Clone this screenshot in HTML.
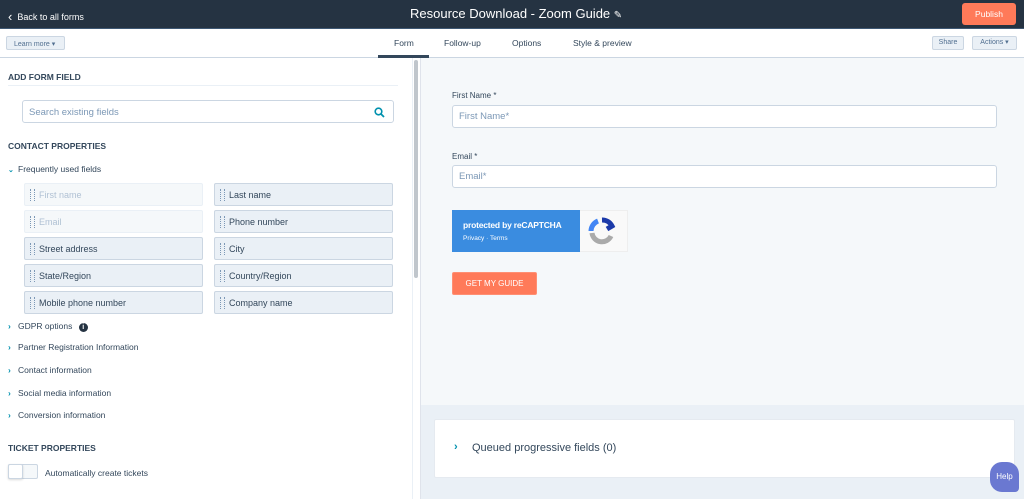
<!DOCTYPE html>
<html><head><style>
*{box-sizing:border-box;margin:0;padding:0}
body{width:1024px;height:499px;overflow:hidden;font-family:"Liberation Sans",sans-serif;background:#f5f8fa;position:relative;color:#33475b}
.a{position:absolute}
.top{left:0;top:0;width:1024px;height:29px;background:#253342;border-bottom:1px solid #3e5874}
.bar{left:0;top:29px;width:1024px;height:29px;background:#fff;border-bottom:1px solid #cbd6e2}
.left{left:0;top:58px;width:412px;height:441px;background:#fff}
.tile{position:absolute;width:179px;height:23px;background:#eaf0f6;border:1px solid #cbd6e2;border-radius:2px;font-size:9px;color:#33475b;padding:6px 0 0 14px}
.tile:before{content:"";position:absolute;left:5px;top:5px;width:3px;height:12px;border-left:1px dotted #7c98b6;border-right:1px dotted #7c98b6}
.tile.dis{background:#f5f8fa;color:#b0c1d4;border-color:#eaf0f6}
.sec{font-size:8.5px;font-weight:bold;color:#33475b}
.row{font-size:8.5px;color:#33475b;left:8px}
.row b{color:#0091ae;display:inline-block;width:10px;font-weight:bold}
.lbl{font-size:8px;color:#33475b}
.inp{background:#fff;border:1px solid #cbd6e2;border-radius:3px;height:23px;font-size:9.5px;color:#7c98b6;padding:5px 0 0 6px}
</style></head><body>
<div class="a top">
 <div class="a" style="left:8px;top:8px;color:#fff;font-size:9px"><span style="font-size:13px;position:relative;top:1px">&#8249;</span>&nbsp; Back to all forms</div>
 <div class="a" style="left:410px;top:6px;color:#fff;font-size:13px">Resource Download - Zoom Guide <span style="font-size:10px">&#9998;</span></div>
 <div class="a" style="left:962px;top:3px;width:54px;height:22px;background:#ff7a59;border-radius:3px;color:#fff;font-size:8.5px;text-align:center;line-height:22px">Publish</div>
</div>
<div class="a bar">
 <div class="a" style="left:6px;top:7px;width:59px;height:14px;background:#eaf0f6;border:1px solid #cbd6e2;border-radius:2px;font-size:7px;color:#516f90;padding:3px 0 0 7px">Learn more &#9662;</div>
 <div class="a" style="left:394px;top:9px;font-size:8.5px">Form</div>
 <div class="a" style="left:378px;top:26px;width:51px;height:3px;background:#33475b"></div>
 <div class="a" style="left:444px;top:9px;font-size:8.5px">Follow-up</div>
 <div class="a" style="left:512px;top:9px;font-size:8.5px">Options</div>
 <div class="a" style="left:573px;top:9px;font-size:8.5px">Style &amp; preview</div>
 <div class="a" style="left:932px;top:7px;width:32px;height:14px;background:#eaf0f6;border:1px solid #cbd6e2;border-radius:2px;font-size:7px;color:#516f90;text-align:center;line-height:12px">Share</div>
 <div class="a" style="left:972px;top:7px;width:45px;height:14px;background:#eaf0f6;border:1px solid #cbd6e2;border-radius:2px;font-size:7px;color:#516f90;text-align:center;line-height:12px">Actions &#9662;</div>
</div>
<div class="a left">
 <div class="a sec" style="left:8px;top:14px">ADD FORM FIELD</div>
 <div class="a" style="left:8px;top:27px;width:390px;height:1px;background:#eaf0f6"></div>
 <div class="a inp" style="left:22px;top:42px;width:372px;height:23px;padding-top:6px">Search existing fields
  <svg class="a" style="right:8px;top:6px" width="11" height="11" viewBox="0 0 11 11"><circle cx="4.5" cy="4.5" r="3.3" fill="none" stroke="#0091ae" stroke-width="1.6"/><path d="M7 7l3 3" stroke="#0091ae" stroke-width="1.8"/></svg></div>
 <div class="a sec" style="left:8px;top:83px">CONTACT PROPERTIES</div>
 <div class="a row" style="top:106px"><b style="font-size:7px">&#8964;</b>Frequently used fields</div>
 <div class="tile dis" style="left:24px;top:125px">First name</div>
 <div class="tile" style="left:214px;top:125px">Last name</div>
 <div class="tile dis" style="left:24px;top:152px">Email</div>
 <div class="tile" style="left:214px;top:152px">Phone number</div>
 <div class="tile" style="left:24px;top:179px">Street address</div>
 <div class="tile" style="left:214px;top:179px">City</div>
 <div class="tile" style="left:24px;top:206px">State/Region</div>
 <div class="tile" style="left:214px;top:206px">Country/Region</div>
 <div class="tile" style="left:24px;top:233px">Mobile phone number</div>
 <div class="tile" style="left:214px;top:233px">Company name</div>
 <div class="a row" style="top:263px"><b>›</b>GDPR options <span style="display:inline-block;width:9px;height:9px;border-radius:50%;background:#253342;color:#fff;font-size:7px;text-align:center;line-height:9px;margin-left:4px;font-weight:bold">i</span></div>
 <div class="a row" style="top:284px"><b>›</b>Partner Registration Information</div>
 <div class="a row" style="top:307px"><b>›</b>Contact information</div>
 <div class="a row" style="top:330px"><b>›</b>Social media information</div>
 <div class="a row" style="top:352px"><b>›</b>Conversion information</div>
 <div class="a sec" style="left:8px;top:385px">TICKET PROPERTIES</div>
 <div class="a" style="left:8px;top:406px;width:30px;height:15px;background:#f5f8fa;border:1px solid #cbd6e2;border-radius:2px"></div>
 <div class="a" style="left:8px;top:406px;width:15px;height:15px;background:#fff;border:1px solid #cbd6e2;border-radius:2px;box-shadow:0 1px 2px rgba(0,0,0,.15)"></div>
 <div class="a" style="left:45px;top:410px;font-size:8.5px">Automatically create tickets</div>
</div>
<div class="a" style="left:412px;top:58px;width:9px;height:441px;background:#fff;border-left:1px solid #eaf0f6;border-right:1px solid #dfe3eb"></div>
<div class="a" style="left:414px;top:60px;width:4px;height:218px;background:#c0c6cc;border-radius:2px"></div>
<div class="a lbl" style="left:452px;top:91px">First Name *</div>
<div class="a inp" style="left:452px;top:105px;width:545px">First Name*</div>
<div class="a lbl" style="left:452px;top:152px">Email *</div>
<div class="a inp" style="left:452px;top:165px;width:545px">Email*</div>
<div class="a" style="left:452px;top:210px;width:176px;height:42px;background:#f9f9f9;border:1px solid #eee"></div>
<div class="a" style="left:452px;top:210px;width:128px;height:42px;background:#3a8ce0;color:#fff;padding:10px 0 0 11px"><div style="font-size:8.5px;font-weight:bold;letter-spacing:-.2px">protected by reCAPTCHA</div><div style="font-size:6.5px;margin-top:5px">Privacy · Terms</div></div>
<svg class="a" style="left:586px;top:215px" width="32" height="32" viewBox="0 0 32 32"><path d="M16 5a11 11 0 0 1 10 6l-5 3" fill="none" stroke="#1c3aa9" stroke-width="5"/><path d="M5 16a11 11 0 0 1 7-10" fill="none" stroke="#4285f4" stroke-width="5"/><path d="M6 18a10 10 0 0 0 19 3" fill="none" stroke="#aaa" stroke-width="5"/></svg>
<div class="a" style="left:452px;top:272px;width:85px;height:23px;background:#ff7a59;border:1px solid #f06;border-color:#ff8f73;border-radius:2px;color:#fff;font-size:8px;text-align:center;line-height:21px">GET MY GUIDE</div>
<div class="a" style="left:421px;top:405px;width:603px;height:94px;background:#eaf0f6"></div>
<div class="a" style="left:434px;top:419px;width:581px;height:59px;background:#fff;border:1px solid #e5eaf0;border-radius:2px"></div>
<div class="a" style="left:454px;top:441px;font-size:11px;color:#0091ae;font-weight:bold">›</div>
<div class="a" style="left:472px;top:442px;font-size:11px;color:#33475b">Queued progressive fields (0)</div>
<div class="a" style="left:990px;top:462px;width:29px;height:30px;background:#6a78d1;border-radius:12px 12px 4px 12px;color:#fff;font-size:8px;text-align:center;line-height:30px">Help</div>
</body></html>
